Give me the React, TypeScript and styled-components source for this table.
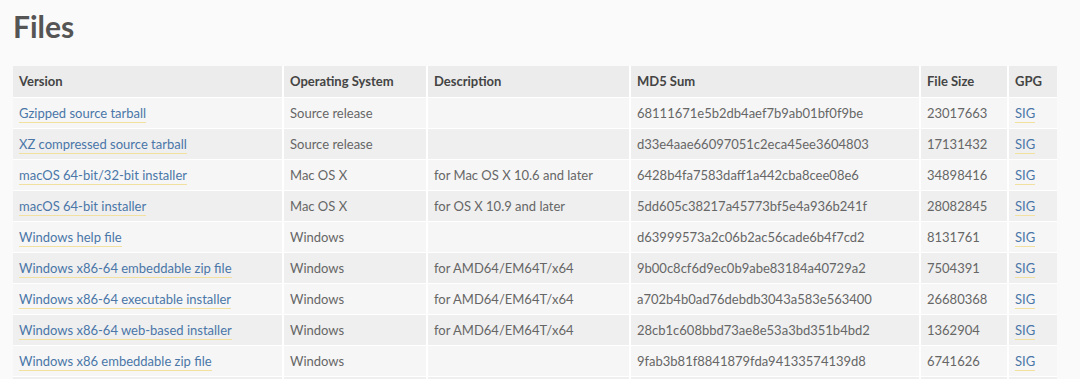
import React from "react";
import styled, { createGlobalStyle } from "styled-components";

const Global = createGlobalStyle`
  html, body { margin: 0; padding: 0; background: #fafafa; overflow: hidden; }
  body { font-family: Lato, "Open Sans", sans-serif; color: #666; }
`;

const Page = styled.div`
  padding: 8px 23px 0 13px;
`;

const Title = styled.h2`
  margin: 0 0 22px 0;
  font-family: Lato, sans-serif;
  font-size: 30px;
  font-weight: 700;
  color: #555;
  line-height: 36px;
`;

const Table = styled.table`
  width: 1044px;
  border-collapse: collapse;
  table-layout: fixed;
  font-size: 13px;
`;

const Col = styled.col<{ $w: number }>`
  width: ${(p) => p.$w}px;
`;

const HeadCell = styled.th`
  box-sizing: border-box;
  text-align: left;
  font-weight: 700;
  color: #444;
  background: #ececec;
  height: 31px;
  padding: 0 6px;
  border-left: 2px solid #fff;
  border-bottom: 1px solid #fff;
  white-space: nowrap;
  &:first-child { border-left: none; }
`;

const Row = styled.tr<{ $alt: boolean }>`
  background: ${(p) => (p.$alt ? "#efefef" : "#f6f6f6")};
`;

const Cell = styled.td`
  box-sizing: border-box;
  height: 31px;
  padding: 0 6px;
  color: #666;
  border-left: 2px solid #fff;
  border-bottom: 1px solid #fff;
  white-space: nowrap;
  overflow: hidden;
  &:first-child { border-left: none; }
`;

const Link = styled.a`
  color: #4a76a8;
  text-decoration: none;
  border-bottom: 1px solid #f2e0a0;
  padding-bottom: 1px;
`;

const cols = [
  ["Version", 270],
  ["Operating System", 144],
  ["Description", 203],
  ["MD5 Sum", 290],
  ["File Size", 88],
  ["GPG", 49],
] as const;

const rows = [
  ["Gzipped source tarball", "Source release", "", "68111671e5b2db4aef7b9ab01bf0f9be", "23017663"],
  ["XZ compressed source tarball", "Source release", "", "d33e4aae66097051c2eca45ee3604803", "17131432"],
  ["macOS 64-bit/32-bit installer", "Mac OS X", "for Mac OS X 10.6 and later", "6428b4fa7583daff1a442cba8cee08e6", "34898416"],
  ["macOS 64-bit installer", "Mac OS X", "for OS X 10.9 and later", "5dd605c38217a45773bf5e4a936b241f", "28082845"],
  ["Windows help file", "Windows", "", "d63999573a2c06b2ac56cade6b4f7cd2", "8131761"],
  ["Windows x86-64 embeddable zip file", "Windows", "for AMD64/EM64T/x64", "9b00c8cf6d9ec0b9abe83184a40729a2", "7504391"],
  ["Windows x86-64 executable installer", "Windows", "for AMD64/EM64T/x64", "a702b4b0ad76debdb3043a583e563400", "26680368"],
  ["Windows x86-64 web-based installer", "Windows", "for AMD64/EM64T/x64", "28cb1c608bbd73ae8e53a3bd351b4bd2", "1362904"],
  ["Windows x86 embeddable zip file", "Windows", "", "9fab3b81f8841879fda94133574139d8", "6741626"],
];

export default function App() {
  return (
    <Page>
      <Global />
      <Title>Files</Title>
      <Table>
        <colgroup>
          {cols.map(([n, w]) => (
            <Col key={n} $w={w} />
          ))}
        </colgroup>
        <thead>
          <tr>
            {cols.map(([n]) => (
              <HeadCell key={n}>{n}</HeadCell>
            ))}
          </tr>
        </thead>
        <tbody>
          {rows.map((r, i) => (
            <Row key={i} $alt={i % 2 === 1}>
              <Cell><Link href="#">{r[0]}</Link></Cell>
              <Cell>{r[1]}</Cell>
              <Cell>{r[2]}</Cell>
              <Cell>{r[3]}</Cell>
              <Cell>{r[4]}</Cell>
              <Cell><Link href="#">SIG</Link></Cell>
            </Row>
          ))}
          <Row $alt={true}>
            {cols.map(([n]) => (
              <Cell key={n} />
            ))}
          </Row>
        </tbody>
      </Table>
    </Page>
  );
}
